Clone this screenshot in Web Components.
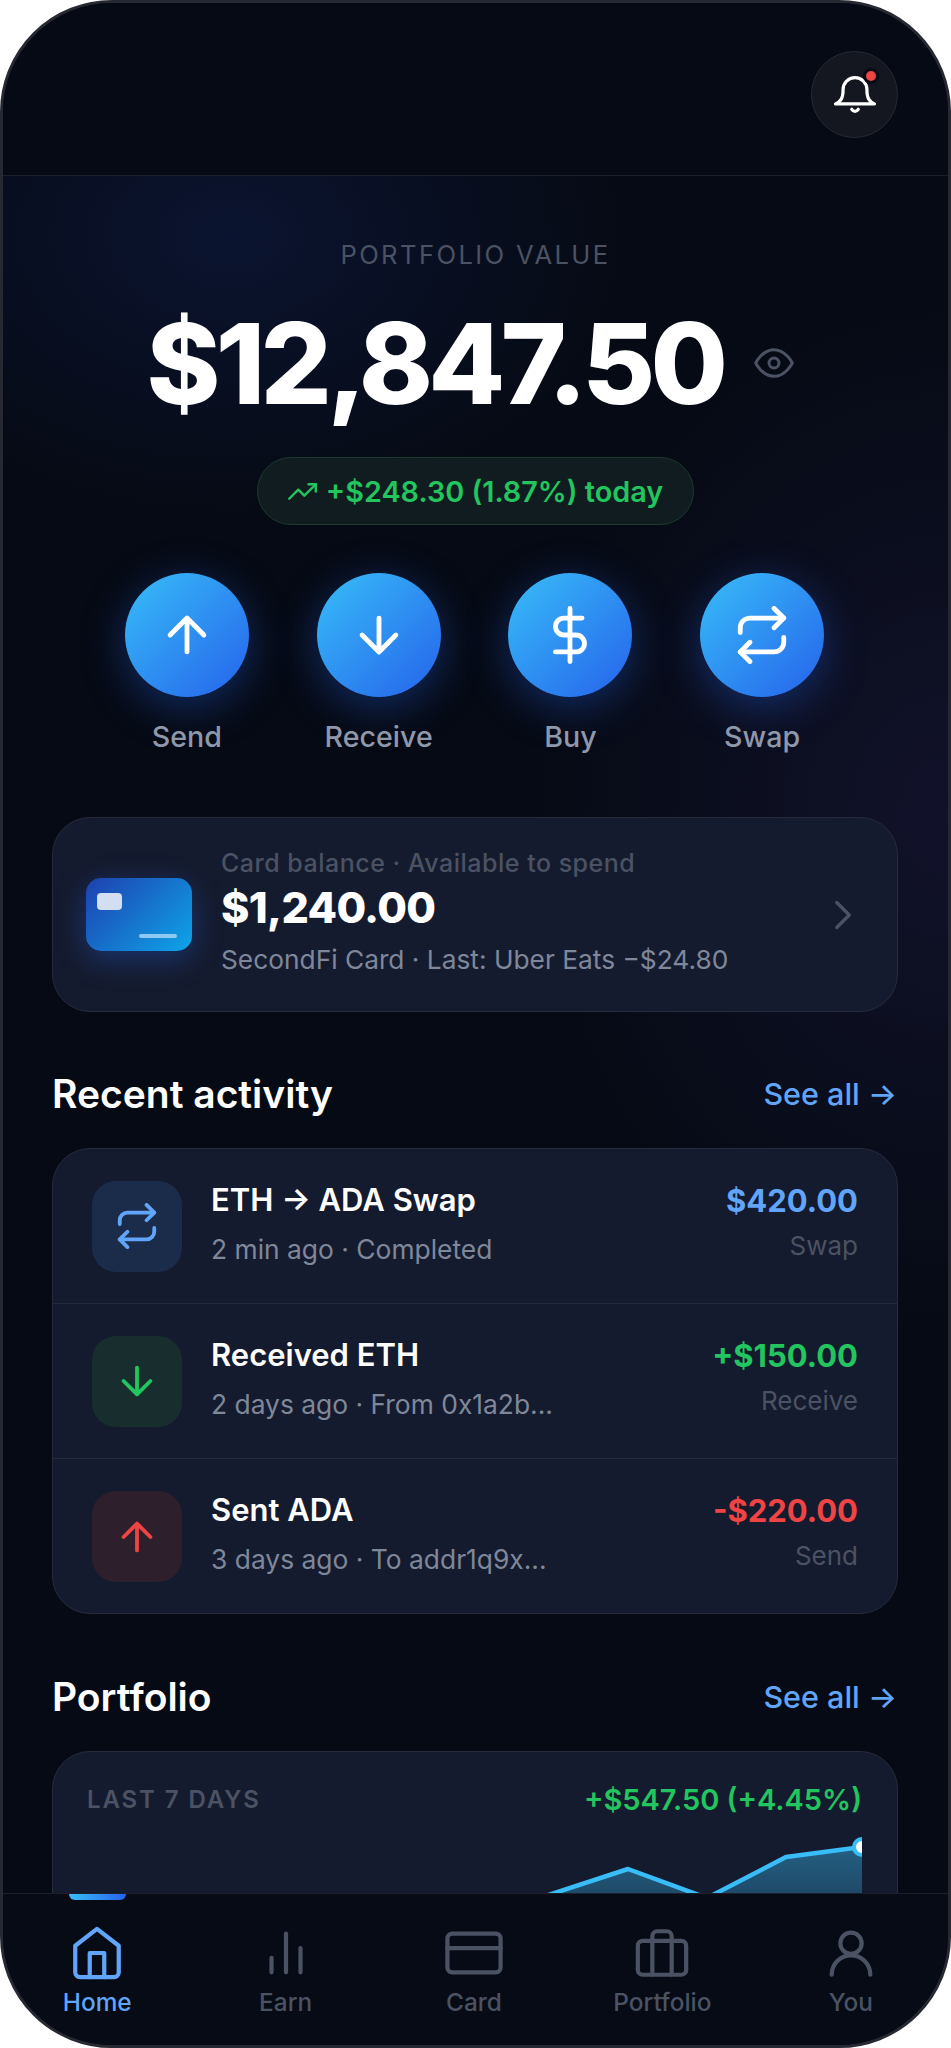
<!DOCTYPE html>
<html lang="en">
<head>
<meta charset="utf-8">
<title>Wallet home</title>
<style>
  html, body { margin: 0; padding: 0; background: #fff; }
  body { font-family: Inter, "Liberation Sans", sans-serif; }
</style>
</head>
<body>
<phone-shell>
  <top-bar></top-bar>
  <main-scroll>
    <balance-hero amount="$12,847.50" change="+$248.30 (1.87%) today"></balance-hero>
    <action-row>
      <action-button icon="up">Send</action-button>
      <action-button icon="down">Receive</action-button>
      <action-button icon="dollar">Buy</action-button>
      <action-button icon="swap">Swap</action-button>
    </action-row>
    <card-promo>
      <span slot="label">Card balance · Available to spend</span>
      <span slot="amount">$1,240.00</span>
      <span slot="note">SecondFi Card · Last: Uber Eats −$24.80</span>
    </card-promo>
    <section-head style="margin-top:59px">Recent activity</section-head>
    <activity-list>
      <activity-row icon="swap" tone="blue">
        <span slot="title">ETH → ADA Swap</span>
        <span slot="sub">2 min ago · Completed</span>
        <span slot="amount">$420.00</span>
        <span slot="kind">Swap</span>
      </activity-row>
      <activity-row icon="down" tone="green">
        <span slot="title">Received ETH</span>
        <span slot="sub">2 days ago · From 0x1a2b...</span>
        <span slot="amount">+$150.00</span>
        <span slot="kind">Receive</span>
      </activity-row>
      <activity-row icon="up" tone="red">
        <span slot="title">Sent ADA</span>
        <span slot="sub">3 days ago · To addr1q9x...</span>
        <span slot="amount">-$220.00</span>
        <span slot="kind">Send</span>
      </activity-row>
    </activity-list>
    <section-head style="margin-top:60px">Portfolio</section-head>
    <chart-card gain="+$547.50 (+4.45%)"></chart-card>
  </main-scroll>
  <tab-bar>
    <tab-item icon="home" active>Home</tab-item>
    <tab-item icon="bars">Earn</tab-item>
    <tab-item icon="card">Card</tab-item>
    <tab-item icon="case">Portfolio</tab-item>
    <tab-item icon="user">You</tab-item>
  </tab-bar>
</phone-shell>

<script>
// all icons sit on a 24 unit grid, stroke only
const ICONS = {
  up: '<path d="M12 19V5M5 12l7-7 7 7"/>',
  down: '<path d="M12 5v14M19 12l-7 7-7-7"/>',
  dollar: '<path d="M12 1v22M17 5H9.5a3.5 3.5 0 0 0 0 7h5a3.5 3.5 0 0 1 0 7H6"/>',
  swap: '<path d="M17 1l4 4-4 4"/><path d="M3 11V9a4 4 0 0 1 4-4h14"/><path d="M7 23l-4-4 4-4"/><path d="M21 13v2a4 4 0 0 1-4 4H3"/>',
  bell: '<path d="M6.5 9.5a5.5 5.5 0 0 1 11 0c0 4 1 5.5 3.5 6.6H3c2.5-1.1 3.5-2.6 3.5-6.6z"/><path d="M10.5 18.6c.8 1.2 2.2 1.2 3 0"/>',
  eye: '<path d="M1 12s4-8 11-8 11 8 11 8-4 8-11 8-11-8-11-8z"/><circle cx="12" cy="12" r="3"/>',
  trend: '<path d="M23 6l-9.5 9.5-5-5L1 18"/><path d="M17 6h6v6"/>',
  chevron: '<path d="M9 18l6-6-6-6"/>',
  home: '<path d="M3 9l9-7 9 7v11a2 2 0 0 1-2 2H5a2 2 0 0 1-2-2z"/><path d="M9 22V12h6v10"/>',
  bars: '<path d="M18 20V10M12 20V4M6 20v-6"/>',
  card: '<rect x="1" y="4" width="22" height="16" rx="2"/><path d="M1 10h22"/>',
  case: '<rect x="2" y="7" width="20" height="14" rx="2"/><path d="M16 21V5a2 2 0 0 0-2-2h-4a2 2 0 0 0-2 2v16"/>',
  user: '<circle cx="12" cy="8" r="4.4"/><path d="M4 21a8 8 0 0 1 16 0"/>'
};

class AppIcon extends HTMLElement {
  connectedCallback() {
    const root = this.attachShadow({ mode: 'open' });
    const size = this.getAttribute('size') || 24;
    const sw = this.getAttribute('stroke') || 2;
    root.innerHTML = `
      <style>
        :host { display: block; width: ${size}px; height: ${size}px; flex: none; }
        svg { display: block; width: 100%; height: 100%; fill: none; stroke: currentColor; stroke-width: ${sw}; stroke-linecap: round; stroke-linejoin: round; }
      </style>
      <svg viewBox="0 0 24 24">${ICONS[this.getAttribute('name')]}</svg>`;
  }
}

class PhoneShell extends HTMLElement {
  constructor() {
    super();
    this.attachShadow({ mode: 'open' }).innerHTML = `
      <style>
        :host {
          display: flex; flex-direction: column; box-sizing: border-box;
          width: 951px; height: 2048px; overflow: hidden;
          border: 3px solid #262932; border-radius: 112px;
          background: #060a14; color: #fff;
          font-family: Inter, "Liberation Sans", sans-serif;
        }
      </style>
      <slot></slot>`;
  }
}

class TopBar extends HTMLElement {
  constructor() {
    super();
    this.attachShadow({ mode: 'open' }).innerHTML = `
      <style>
        :host {
          display: flex; justify-content: flex-end; align-items: flex-start; flex: none;
          box-sizing: border-box; height: 173px; padding: 48px 50px 0 0;
          border-bottom: 1.5px solid #1b1f2b; background: #060a14;
        }
        .bell {
          position: relative; display: flex; align-items: center; justify-content: center;
          box-sizing: border-box; width: 87px; height: 87px; border-radius: 50%;
          background: #14171f; border: 1.5px solid #262a35; color: #fff;
        }
        .dot {
          position: absolute; top: 16px; right: 18px; width: 10px; height: 10px;
          border-radius: 50%; background: #ef4444; border: 3px solid #060a14;
        }
      </style>
      <div class="bell">
        <app-icon name="bell" size="52" stroke="1.5"></app-icon>
        <span class="dot"></span>
      </div>`;
  }
}

class MainScroll extends HTMLElement {
  constructor() {
    super();
    this.attachShadow({ mode: 'open' }).innerHTML = `
      <style>
        :host {
          display: block; flex: 1; min-height: 0; overflow: hidden;
          background:
            radial-gradient(ellipse 400px 280px at 24% 60px, #0b1430 0%, rgba(11,20,48,0) 100%),
            radial-gradient(ellipse 420px 520px at 100% 640px, #11122a 0%, rgba(17,18,42,0) 100%),
            #060a14;
        }
      </style>
      <slot></slot>`;
  }
}

class BalanceHero extends HTMLElement {
  connectedCallback() {
    this.attachShadow({ mode: 'open' }).innerHTML = `
      <style>
        :host { display: flex; flex-direction: column; align-items: center; padding-top: 63px; }
        .label { font-size: 25.6px; line-height: 32px; letter-spacing: 2.4px; font-weight: 400; color: #4b5263; }
        .row { display: flex; align-items: center; gap: 31px; margin-top: 32px; padding-right: 10px; }
        .value { font-size: 112px; line-height: 120px; font-weight: 800; letter-spacing: -4.7px; color: #fff; }
        .eye { color: #4b5263; }
        .chip {
          display: flex; align-items: center; gap: 9px; box-sizing: border-box;
          height: 68px; margin-top: 34px; padding: 0 30px;
          border-radius: 34px; background: #101c20; border: 1.5px solid #1b3a2c;
          color: #22c55e; font-size: 28.8px; font-weight: 600;
        }
      </style>
      <div class="label">PORTFOLIO VALUE</div>
      <div class="row">
        <div class="value">${this.getAttribute('amount')}</div>
        <app-icon class="eye" name="eye" size="40" stroke="1.8"></app-icon>
      </div>
      <div class="chip">
        <app-icon name="trend" size="29"></app-icon>
        <span>${this.getAttribute('change')}</span>
      </div>`;
  }
}

class ActionRow extends HTMLElement {
  constructor() {
    super();
    this.attachShadow({ mode: 'open' }).innerHTML = `
      <style>
        :host { display: grid; grid-template-columns: repeat(4, 1fr); margin-top: 48px; padding: 0 90px 0 88px; }
      </style>
      <slot></slot>`;
  }
}

class ActionButton extends HTMLElement {
  connectedCallback() {
    this.attachShadow({ mode: 'open' }).innerHTML = `
      <style>
        :host { display: flex; flex-direction: column; align-items: center; gap: 23px; }
        .round {
          display: flex; align-items: center; justify-content: center;
          width: 124px; height: 124px; border-radius: 50%; color: #fff;
          background: linear-gradient(135deg, #38bdf8 0%, #2563eb 100%);
          box-shadow: 0 10px 44px rgba(37, 99, 235, .38);
        }
        .text { font-size: 28.6px; line-height: 34px; font-weight: 500; color: #8f98ab; }
      </style>
      <div class="round"><app-icon name="${this.getAttribute('icon')}" size="58"></app-icon></div>
      <div class="text"><slot></slot></div>`;
  }
}

class CardPromo extends HTMLElement {
  constructor() {
    super();
    this.attachShadow({ mode: 'open' }).innerHTML = `
      <style>
        :host {
          display: flex; align-items: center; box-sizing: border-box;
          height: 195px; margin: 63px 50px 0 49px; padding: 0 34px 0 33px;
          border-radius: 38px; background: #151b2e; border: 1.5px solid #262c3c;
        }
        .art {
          position: relative; flex: none; width: 106px; height: 73px; border-radius: 15px;
          background: linear-gradient(135deg, #1e40af 0%, #0ea5e9 100%);
          box-shadow: 0 8px 30px rgba(37, 99, 235, .35);
        }
        .art::before { content: ""; position: absolute; left: 11px; top: 15px; width: 25px; height: 17px; border-radius: 4px; background: #d3def2; }
        .art::after { content: ""; position: absolute; right: 15px; bottom: 13px; width: 38px; height: 4px; border-radius: 2px; background: #8fc8f0; }
        .copy { flex: 1; margin: 0 0 4px 29px; }
        .label { font-size: 25px; line-height: 30px; font-weight: 500; color: #4b5263; letter-spacing: .5px; }
        .amount { font-size: 43px; line-height: 54px; font-weight: 800; letter-spacing: -.7px; color: #fff; margin-top: 1.5px; }
        .note { font-size: 26.3px; line-height: 34px; color: #7f879b; margin-top: 9.5px; }
        .go { color: #4b5263; margin-right: -5px; }
      </style>
      <div class="art"></div>
      <div class="copy">
        <div class="label"><slot name="label"></slot></div>
        <div class="amount"><slot name="amount"></slot></div>
        <div class="note"><slot name="note"></slot></div>
      </div>
      <app-icon class="go" name="chevron" size="50" stroke="1.6"></app-icon>`;
  }
}

class SectionHead extends HTMLElement {
  constructor() {
    super();
    this.attachShadow({ mode: 'open' }).innerHTML = `
      <style>
        :host { display: flex; justify-content: space-between; align-items: center; height: 44px; margin: 0 51px 0 49px; }
        .title { font-size: 39px; font-weight: 600; color: #fff; }
        .more { font-size: 30.5px; font-weight: 500; color: #60a5fa; }
      </style>
      <div class="title"><slot></slot></div>
      <div class="more">See all →</div>`;
  }
}

class ActivityList extends HTMLElement {
  constructor() {
    super();
    this.attachShadow({ mode: 'open' }).innerHTML = `
      <style>
        :host {
          display: block; box-sizing: border-box; overflow: hidden; height: 466px;
          margin: 33px 50px 0 49px;
          border-radius: 38px; background: #151b2e; border: 1.5px solid #262c3c;
        }
      </style>
      <slot></slot>`;
  }
}

const TONES = {
  blue: { bg: '#1b2b4a', fg: '#60a5fa' },
  green: { bg: '#172d2e', fg: '#22c55e' },
  red: { bg: '#2e1f2d', fg: '#ef4444' }
};

class ActivityRow extends HTMLElement {
  connectedCallback() {
    const tone = TONES[this.getAttribute('tone')];
    this.attachShadow({ mode: 'open' }).innerHTML = `
      <style>
        :host {
          display: flex; align-items: center; box-sizing: border-box; height: 155px;
          padding: 0 39px 0 39px; border-bottom: 1.5px solid #252b3b;
        }
        :host(:last-child) { border-bottom: 0; }
        .tile {
          display: flex; align-items: center; justify-content: center; flex: none;
          width: 90px; height: 91px; border-radius: 24px;
          background: ${tone.bg}; color: ${tone.fg};
        }
        .left { flex: 1; margin: -5px 0 0 29px; }
        .title { font-size: 31px; line-height: 38px; font-weight: 600; color: #fff; }
        .sub { font-size: 26.4px; line-height: 36px; margin-top: 12px; color: #7f879b; }
        .right { text-align: right; margin-top: -8px; }
        .amount { font-size: 31px; line-height: 38px; font-weight: 700; color: ${tone.fg}; }
        .kind { font-size: 26px; line-height: 34px; margin-top: 9px; color: #4b5263; }
      </style>
      <div class="tile"><app-icon name="${this.getAttribute('icon')}" size="46"></app-icon></div>
      <div class="left">
        <div class="title"><slot name="title"></slot></div>
        <div class="sub"><slot name="sub"></slot></div>
      </div>
      <div class="right">
        <div class="amount"><slot name="amount"></slot></div>
        <div class="kind"><slot name="kind"></slot></div>
      </div>`;
  }
}

class ChartCard extends HTMLElement {
  connectedCallback() {
    // chart box starts at page x=87, y=1830 - the lower part gets cut by the tab bar
    this.attachShadow({ mode: 'open' }).innerHTML = `
      <style>
        :host {
          display: block; box-sizing: border-box; height: 300px;
          margin: 33px 50px 0 49px; padding: 26px 35px 0 34px;
          border-radius: 38px; background: #151b2e; border: 1.5px solid #262c3c;
        }
        .head { display: flex; justify-content: space-between; align-items: center; height: 42px; }
        .label { font-size: 24px; font-weight: 600; letter-spacing: 1.9px; color: #4b5263; }
        .gain { font-size: 29px; font-weight: 600; color: #22c55e; }
        svg { display: block; width: 775px; height: 170px; margin-top: 9px; }
      </style>
      <div class="head">
        <span class="label">LAST 7 DAYS</span>
        <span class="gain">${this.getAttribute('gain')}</span>
      </div>
      <svg viewBox="0 0 775 170">
        <defs>
          <linearGradient id="fill" x1="0" y1="0" x2="0" y2="1">
            <stop offset="0" stop-color="#38bdf8" stop-opacity=".42"/>
            <stop offset="1" stop-color="#38bdf8" stop-opacity="0"/>
          </linearGradient>
        </defs>
        <path d="M0 118 L155 108 L388 90 L541 40 L620 69 L699 28 L775 18 V170 H0 Z" fill="url(#fill)"/>
        <path d="M0 118 L155 108 L388 90 L541 40 L620 69 L699 28 L775 18" fill="none" stroke="#38bdf8" stroke-width="4.5" stroke-linejoin="round"/>
        <circle cx="775" cy="18" r="8" fill="#fff" stroke="#38bdf8" stroke-width="4"/>
      </svg>`;
  }
}

class TabBar extends HTMLElement {
  constructor() {
    super();
    this.attachShadow({ mode: 'open' }).innerHTML = `
      <style>
        :host {
          display: grid; grid-template-columns: repeat(5, 1fr); flex: none;
          box-sizing: border-box; height: 152px; padding-right: 3px;
          border-top: 1.5px solid #1c202c; background: #060b15;
        }
      </style>
      <slot></slot>`;
  }
}

class TabItem extends HTMLElement {
  connectedCallback() {
    const on = this.hasAttribute('active');
    this.attachShadow({ mode: 'open' }).innerHTML = `
      <style>
        :host {
          position: relative; display: flex; flex-direction: column; align-items: center;
          padding-top: 30px; color: ${on ? '#60a5fa' : '#4b5263'};
        }
        .mark {
          position: absolute; top: 0; left: 50%; width: 57px; height: 6px; margin-left: -28px;
          border-radius: 0 0 6px 6px;
          background: linear-gradient(90deg, #38bdf8, #2563eb);
        }
        .text { font-size: 24.4px; line-height: 30px; font-weight: 500; margin-top: 5px; }
      </style>
      ${on ? '<span class="mark"></span>' : ''}
      <app-icon name="${this.getAttribute('icon')}" size="58" stroke="1.75"></app-icon>
      <div class="text"><slot></slot></div>`;
  }
}

customElements.define('app-icon', AppIcon);
customElements.define('phone-shell', PhoneShell);
customElements.define('top-bar', TopBar);
customElements.define('main-scroll', MainScroll);
customElements.define('balance-hero', BalanceHero);
customElements.define('action-row', ActionRow);
customElements.define('action-button', ActionButton);
customElements.define('card-promo', CardPromo);
customElements.define('section-head', SectionHead);
customElements.define('activity-list', ActivityList);
customElements.define('activity-row', ActivityRow);
customElements.define('chart-card', ChartCard);
customElements.define('tab-bar', TabBar);
customElements.define('tab-item', TabItem);
</script>
</body>
</html>
